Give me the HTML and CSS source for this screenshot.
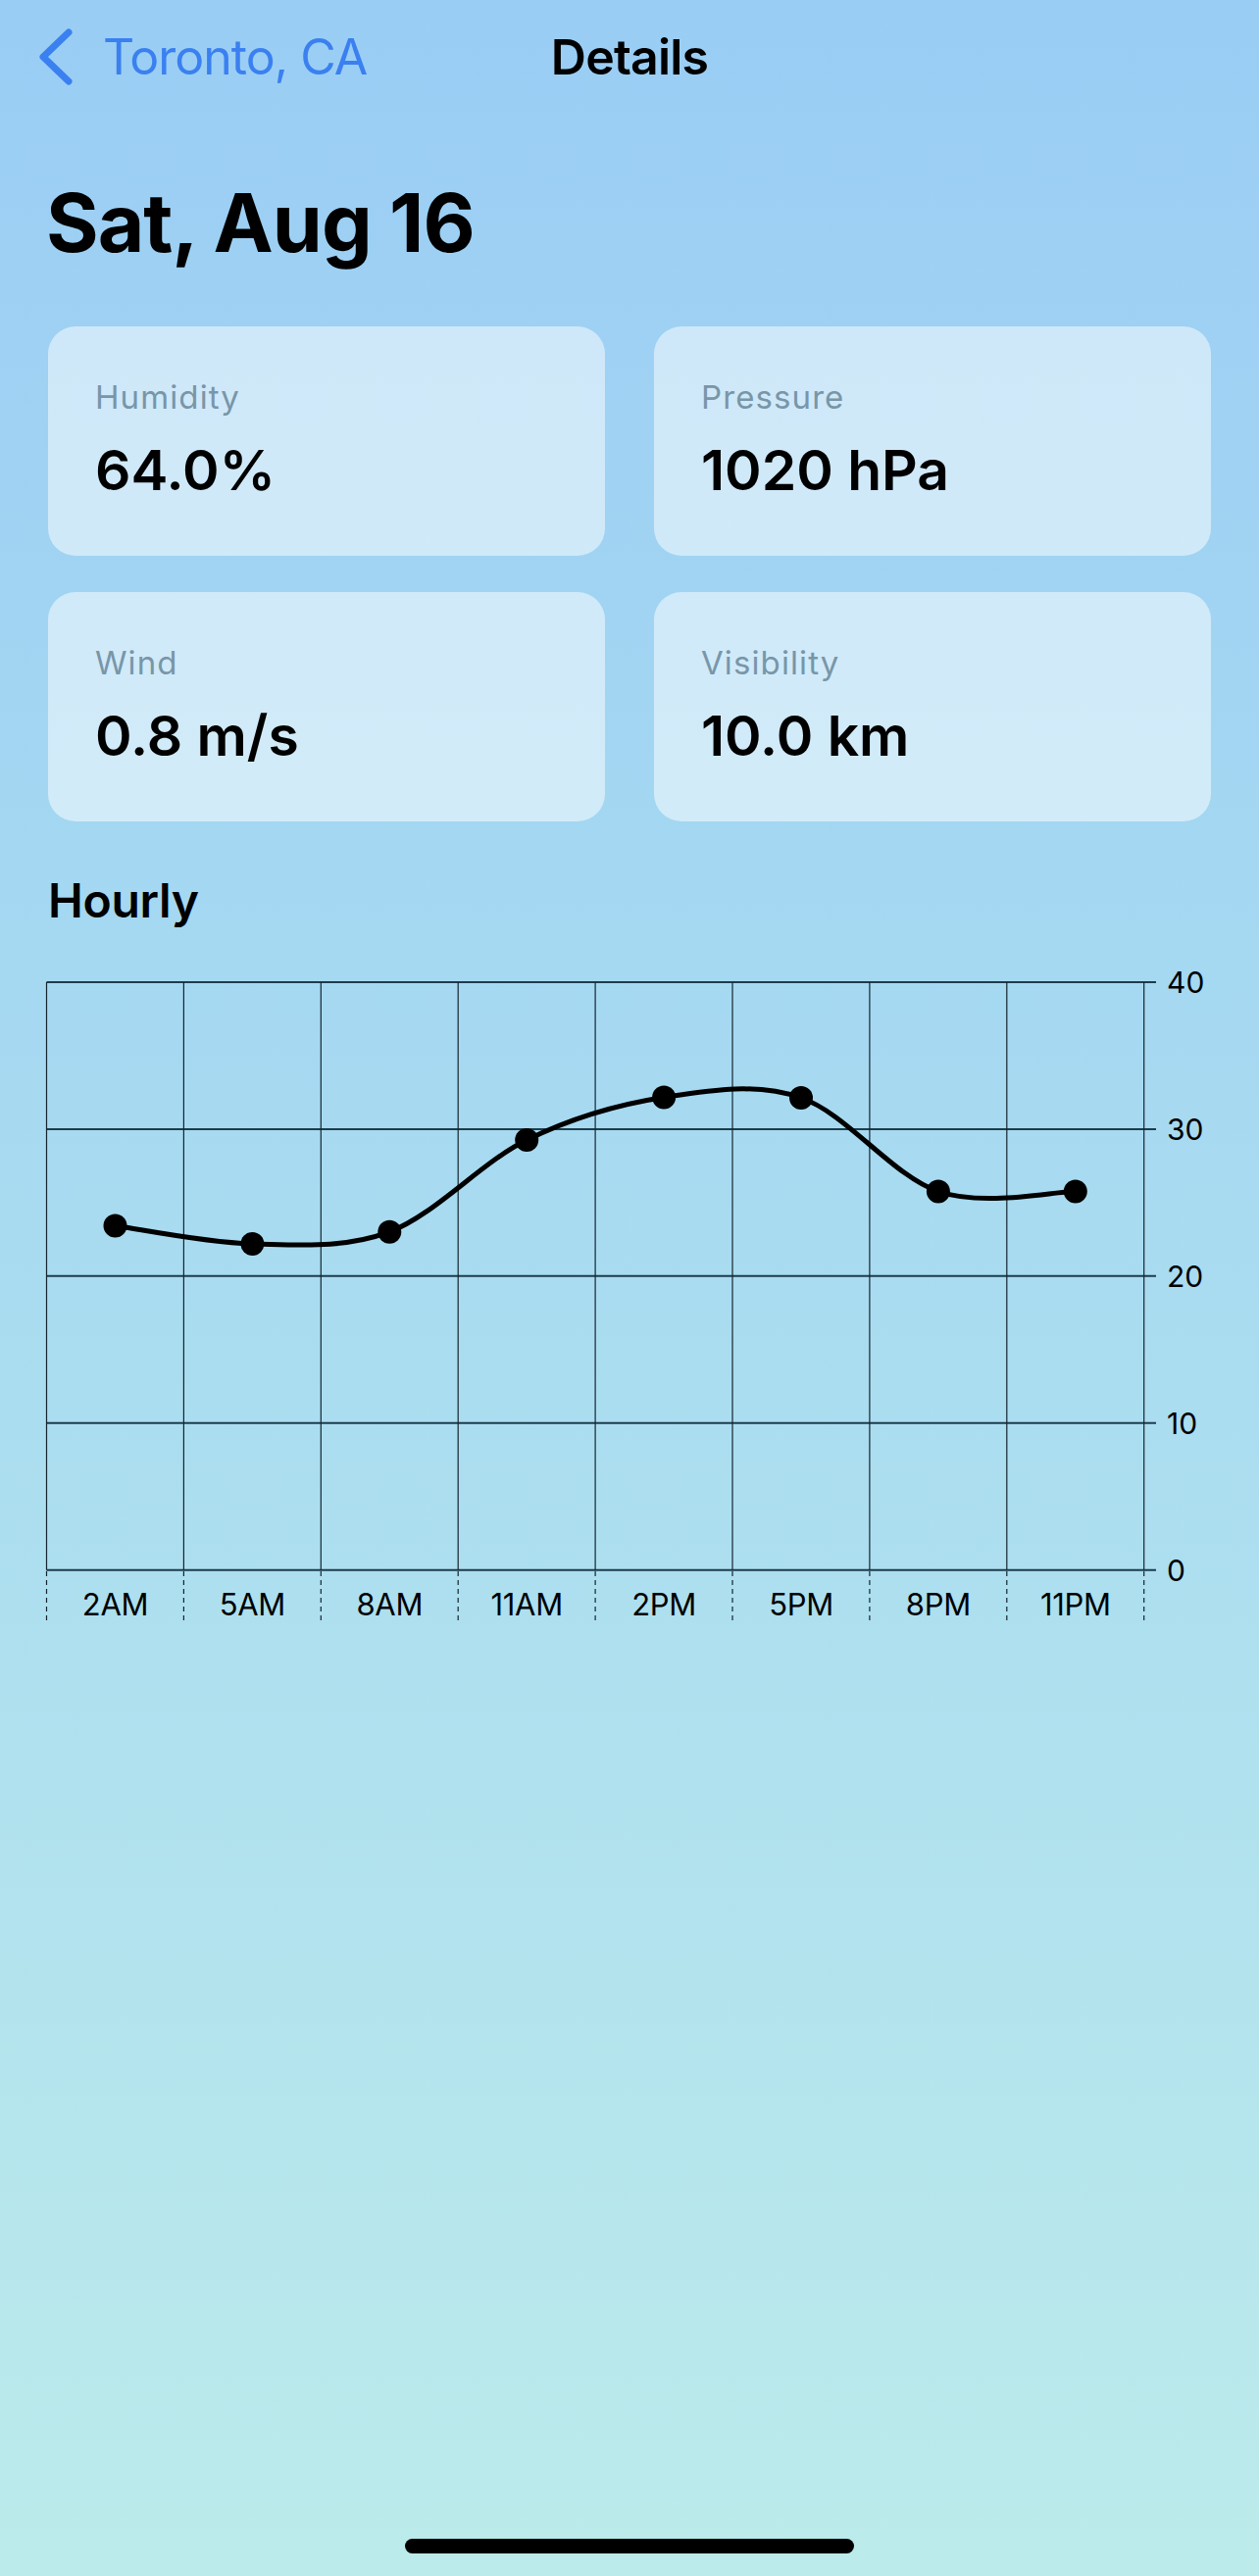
FILE: index.html
```html
<!DOCTYPE html>
<html lang="en">
<head>
<meta charset="utf-8">
<title>Details</title>
<link rel="stylesheet" href="styles.css">
</head>
<body>
<div class="screen">
  <header class="nav">
    <div class="back">
      <svg class="chev" width="40" height="60" viewBox="0 0 40 60" aria-hidden="true">
        <path d="M33 5 L7 30 L33 55" fill="none" stroke="#3a80f0" stroke-width="7" stroke-linecap="round" stroke-linejoin="round"/>
      </svg>
      <span class="back-label">Toronto, CA</span>
    </div>
    <div class="nav-title">Details</div>
    <div></div>
  </header>

  <main class="content">
    <h1 class="date">Sat, Aug 16</h1>

    <section class="cards">
      <div class="card"><div class="card-label">Humidity</div><div class="card-value">64.0%</div></div>
      <div class="card"><div class="card-label">Pressure</div><div class="card-value">1020 hPa</div></div>
      <div class="card"><div class="card-label">Wind</div><div class="card-value">0.8 m/s</div></div>
      <div class="card"><div class="card-label">Visibility</div><div class="card-value">10.0 km</div></div>
    </section>

    <h2 class="section-title">Hourly</h2>

    <svg class="chart" width="1186" height="700" viewBox="49 980 1186 700" aria-label="Hourly temperature chart">
      <g class="hgrid">
        <line x1="47.5" y1="1002" x2="1179" y2="1002"/>
        <line x1="47.5" y1="1151.9" x2="1179" y2="1151.9"/>
        <line x1="47.5" y1="1301.8" x2="1179" y2="1301.8"/>
        <line x1="47.5" y1="1451.8" x2="1179" y2="1451.8"/>
        <line x1="47.5" y1="1601.7" x2="1179" y2="1601.7"/>
      </g>
      <g class="vgrid">
        <line x1="47.5" y1="1002" x2="47.5" y2="1601.7"/>
        <line x1="187.4" y1="1002" x2="187.4" y2="1601.7"/>
        <line x1="327.3" y1="1002" x2="327.3" y2="1601.7"/>
        <line x1="467.2" y1="1002" x2="467.2" y2="1601.7"/>
        <line x1="607.1" y1="1002" x2="607.1" y2="1601.7"/>
        <line x1="747" y1="1002" x2="747" y2="1601.7"/>
        <line x1="886.9" y1="1002" x2="886.9" y2="1601.7"/>
        <line x1="1026.8" y1="1002" x2="1026.8" y2="1601.7"/>
        <line x1="1166.7" y1="1002" x2="1166.7" y2="1601.7"/>
      </g>
      <g class="vdash">
        <line x1="47.5" y1="1603" x2="47.5" y2="1656"/>
        <line x1="187.4" y1="1603" x2="187.4" y2="1656"/>
        <line x1="327.3" y1="1603" x2="327.3" y2="1656"/>
        <line x1="467.2" y1="1603" x2="467.2" y2="1656"/>
        <line x1="607.1" y1="1603" x2="607.1" y2="1656"/>
        <line x1="747" y1="1603" x2="747" y2="1656"/>
        <line x1="886.9" y1="1603" x2="886.9" y2="1656"/>
        <line x1="1026.8" y1="1603" x2="1026.8" y2="1656"/>
        <line x1="1166.7" y1="1603" x2="1166.7" y2="1656"/>
      </g>
      <g class="ylabels">
        <text x="1190" y="1012.8">40</text>
        <text x="1190" y="1162.7">30</text>
        <text x="1190" y="1312.6">20</text>
        <text x="1190" y="1462.6">10</text>
        <text x="1190" y="1612.5">0</text>
      </g>
      <g class="xlabels">
        <text x="117.5" y="1647.5">2AM</text>
        <text x="257.4" y="1647.5">5AM</text>
        <text x="397.3" y="1647.5">8AM</text>
        <text x="537.2" y="1647.5">11AM</text>
        <text x="677.1" y="1647.5">2PM</text>
        <text x="817" y="1647.5">5PM</text>
        <text x="956.9" y="1647.5">8PM</text>
        <text x="1096.8" y="1647.5">11PM</text>
      </g>
      <path class="curve" d="M117.5 1250.5 C140.8 1253.6 210.8 1268 257.4 1269 C304.1 1270 350.7 1274.4 397.3 1256.7 C443.9 1239 490.6 1185.9 537.2 1163 C583.8 1140.1 630.5 1126.7 677.1 1119.5 C723.7 1112.3 770.4 1104 817 1120 C863.6 1136 910.3 1199.6 956.9 1215.5 C1003.5 1231.4 1073.5 1215.5 1096.8 1215.5"/>
      <g class="dots">
        <circle cx="117.5" cy="1250.5" r="12"/>
        <circle cx="257.4" cy="1269" r="12"/>
        <circle cx="397.3" cy="1256.7" r="12"/>
        <circle cx="537.2" cy="1163" r="12"/>
        <circle cx="677.1" cy="1119.5" r="12"/>
        <circle cx="817" cy="1120" r="12"/>
        <circle cx="956.9" cy="1215.5" r="12"/>
        <circle cx="1096.8" cy="1215.5" r="12"/>
      </g>
    </svg>
  </main>

  <div class="spacer"></div>
  <div class="home-indicator"></div>
</div>
</body>
</html>
```

FILE: styles.css
```css
html, body {
  margin: 0;
  padding: 0;
}

body {
  width: 1284px;
  min-height: 2628px;
  font-family: Inter, "Noto Sans", "Liberation Sans", sans-serif;
  color: #000;
  background: linear-gradient(180deg, #9acdf4 0%, #a6d9f1 40%, #aee0ef 65%, #bcebeb 100%);
}

.screen {
  min-height: 2628px;
  display: flex;
  flex-direction: column;
}

.nav {
  display: grid;
  grid-template-columns: 1fr auto 1fr;
  align-items: center;
  padding: 28px 0 0 37px;
  height: 60px;
}

.back {
  display: flex;
  align-items: center;
  gap: 28px;
  color: #3a80f0;
}

.chev {
  display: block;
  flex: none;
}

.back-label {
  font-size: 50px;
  line-height: 60px;
  font-weight: 400;
  letter-spacing: -1px;
}

.nav-title {
  font-size: 50px;
  line-height: 60px;
  font-weight: 600;
  letter-spacing: -0.8px;
  margin-left: -37px;
}

.content {
  padding: 0 49px;
}

.date {
  margin: 90px 0 0 -2px;
  font-size: 82px;
  line-height: 100px;
  font-weight: 700;
  letter-spacing: -1px;
}

.cards {
  margin-top: 55px;
  display: grid;
  grid-template-columns: 1fr 1fr;
  column-gap: 50px;
  row-gap: 37px;
}

.card {
  height: 234px;
  box-sizing: border-box;
  padding: 52px 0 0 48px;
  border-radius: 28px;
  background: rgba(255, 255, 255, 0.5);
}

.card-label {
  font-size: 33px;
  line-height: 40px;
  color: #7896a8;
  letter-spacing: 1.1px;
}

.card-value {
  margin-top: 21px;
  font-size: 57px;
  line-height: 68px;
  font-weight: 600;
  letter-spacing: 0;
}

.section-title {
  margin: 52px 0 0 0;
  font-size: 48px;
  line-height: 58px;
  font-weight: 600;
  letter-spacing: -0.3px;
}

.chart {
  display: block;
  margin-top: 32px;
  overflow: visible;
}

.hgrid line {
  stroke: #1d3c4c;
  stroke-width: 2;
}

.vgrid line {
  stroke: #15252e;
  stroke-width: 1.2;
}

.vdash line {
  stroke: #15252e;
  stroke-width: 1.2;
  stroke-dasharray: 5 4;
}

.ylabels text {
  font-family: Inter, "Noto Sans", "Liberation Sans", sans-serif;
  font-size: 30px;
  fill: #000;
}

.xlabels text {
  font-family: Inter, "Noto Sans", "Liberation Sans", sans-serif;
  font-size: 31px;
  fill: #000;
  text-anchor: middle;
  letter-spacing: -0.3px;
}

.curve {
  fill: none;
  stroke: #000;
  stroke-width: 5;
  stroke-linecap: round;
  stroke-linejoin: round;
}

.dots circle {
  fill: #000;
}

.spacer {
  flex: 1;
}

.home-indicator {
  align-self: center;
  width: 458px;
  height: 15px;
  border-radius: 8px;
  background: #000;
  margin-bottom: 23px;
}
```
